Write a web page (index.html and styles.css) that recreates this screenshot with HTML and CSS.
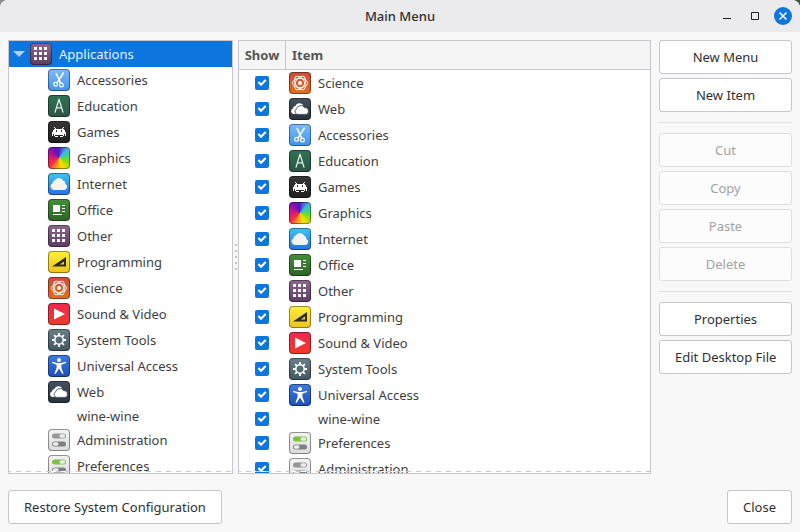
FILE: index.html
```html
<!DOCTYPE html>
<html lang="en">
<head>
  <meta charset="UTF-8">
  <meta name="viewport" content="width=device-width, initial-scale=1">
  <title>Main Menu</title>
  <link rel="stylesheet" href="styles.css">
</head>
<body>
  <svg class="sprite" aria-hidden="true">
    <symbol id="other" viewBox="0 0 20 20">
      <path fill="#fff" d="M3 3h3v3H3zM8 3h3v3H8zM13 3h3v3h-3zM3 8h3v3H3zM8 8h3v3H8zM13 8h3v3h-3zM3 13h3v3H3zM8 13h3v3H8zM13 13h3v3h-3z"/>
    </symbol>
    <symbol id="accessories" viewBox="0 0 20 20">
      <g fill="none" stroke="#fff" stroke-linecap="round">
        <path stroke-width="1.6" d="M7.2 3.6l4.4 9.4M14.2 3.2L8.2 12.6"/>
        <circle cx="6.6" cy="14.2" r="1.9" stroke-width="1.2"/>
        <circle cx="12.4" cy="15" r="1.9" stroke-width="1.2"/>
      </g>
    </symbol>
    <symbol id="education" viewBox="0 0 20 20">
      <g fill="none" stroke="#e4f0e8" stroke-width="1.2" stroke-linecap="round">
        <path d="M10 3.2L6 16.2M10 3.2l4 13M7.600 11.800h4.800"/>
      </g>
    </symbol>
    <symbol id="games" viewBox="0 0 20 20">
      <path fill="#fff" d="M5 5h1v1H5zM14 5h1v1h-1zM6 6h1v1H6zM13 6h1v1h-1zM5 7h10v1H5zM4 8h3v2H4zM8 8h4v2H8zM13 8h3v2h-3zM3 10h14v2H3zM3 12h1v2H3zM5 12h10v1H5zM16 12h1v2h-1zM5 13h1v1H5zM14 13h1v1h-1zM6 14h3v1H6zM11 14h3v1h-3z"/>
    </symbol>
    <symbol id="graphics" viewBox="0 0 20 20"></symbol>
    <symbol id="internet" viewBox="0 0 20 20">
      <path fill="#f4f4f4" d="M5 16a3.500 3.500 0 0 1-1.600-6.600 3 3 0 0 1 2.300-3 4.600 4.600 0 0 1 8.300.2 3.200 3.200 0 0 1 2.400 3.300A3.300 3.300 0 0 1 15.600 16z"/>
    </symbol>
    <symbol id="office" viewBox="0 0 20 20">
      <path fill="#fff" d="M4 5h7v7H4zM4 14h9v1H4zM13 5h3v1h-3zM13 8h3v1h-3zM13 11h3v1h-3z"/>
    </symbol>
    <symbol id="programming" viewBox="0 0 20 20">
      <path fill="#2e2b22" fill-rule="evenodd" d="M3 14.400L17 5v9.400zM10.800 12.500H15V9.600z"/>
    </symbol>
    <symbol id="science" viewBox="0 0 20 20">
      <g fill="none" stroke="#fff" stroke-width=".9">
        <ellipse cx="10" cy="10" rx="7.500" ry="4.600"/>
        <ellipse cx="10" cy="10" rx="7.500" ry="4.600" transform="rotate(60 10 10)"/>
        <ellipse cx="10" cy="10" rx="7.500" ry="4.600" transform="rotate(120 10 10)"/>
      </g>
      <circle cx="10" cy="10" r="2" fill="#fff"/>
    </symbol>
    <symbol id="sound" viewBox="0 0 20 20">
      <path fill="#fff" d="M5 4.500L16 10 5 15.500z"/>
    </symbol>
    <symbol id="system" viewBox="0 0 20 20">
      <g fill="none" stroke="#fff">
        <circle cx="10" cy="10" r="4.200" stroke-width="1.500"/>
        <path stroke-width="1.800" d="M10 3v2.500M10 14.500V17M3 10h2.500M14.500 10H17M5.050 5.050l1.800 1.800M13.150 13.150l1.800 1.800M5.050 14.950l1.800-1.800M13.150 6.850l1.800-1.800"/>
      </g>
    </symbol>
    <symbol id="access" viewBox="0 0 20 20">
      <circle cx="10" cy="4" r="2" fill="#fff"/>
      <path fill="#fff" d="M3 5.800l5 1.200h4l5-1.200v1.200l-4.600 1.800v3l2.200 6h-1.300L10 12.600 6.700 17.800H5.400l2.200-6v-3L3 7z"/>
    </symbol>
    <symbol id="web" viewBox="0 0 20 20">
      <path fill="#fff" d="M3.500 15a2.800 2.800 0 0 1-.6-5.400 3 3 0 0 1 2.500-2.700 4.600 4.600 0 0 1 7.600-1.200l-3 9.300z"/>
      <path fill="#fff" stroke="#39434f" stroke-width=".8" d="M7.200 15.400a3 3 0 0 1-.7-5.400 4.400 4.400 0 0 1 8-1.400 3.800 3.800 0 0 1 3.900 3.800 2.800 2.800 0 0 1-2.300 3z"/>
    </symbol>
    <symbol id="admin" viewBox="0 0 20 20">
      <rect x="3" y="3.500" width="14" height="5" rx="2.500" fill="#969696"/>
      <rect x="10.500" y="4.300" width="5.700" height="3.400" rx="1.700" fill="#ececec"/>
      <rect x="3" y="11.500" width="14" height="5" rx="2.500" fill="#808080"/>
      <rect x="3.800" y="12.300" width="5.700" height="3.400" rx="1.700" fill="#ececec"/>
    </symbol>
    <symbol id="preferences" viewBox="0 0 20 20">
      <rect x="3" y="3.500" width="14" height="5" rx="2.500" fill="#7cc142"/>
      <rect x="10.500" y="4.300" width="5.700" height="3.400" rx="1.700" fill="#ececec"/>
      <rect x="3" y="11.500" width="14" height="5" rx="2.500" fill="#808080"/>
      <rect x="3.800" y="12.300" width="5.700" height="3.400" rx="1.700" fill="#ececec"/>
    </symbol>
  </svg>

  <div class="window">
    <header class="titlebar">
      <h1>Main Menu</h1>
      <div class="window-buttons">
        <button type="button" aria-label="Minimize">
          <svg width="18" height="18"><path d="M5 11.500h8" stroke="#222" fill="none"/></svg>
        </button>
        <button type="button" aria-label="Maximize">
          <svg width="18" height="18"><path d="M5.500 5.500h7v7h-7z" stroke="#222" fill="none"/></svg>
        </button>
        <button type="button" class="close" aria-label="Close window">
          <svg width="18" height="18"><path d="M5.500 5.500l7 7M12.500 5.500l-7 7" stroke="#fff" stroke-width="1.500" fill="none"/></svg>
        </button>
      </div>
    </header>

    <main class="content">
      <nav class="pane menus">
        <div class="row selected">
          <span class="arrow"></span>
          <svg class="icon other"><use href="#other"/></svg>
          <span>Applications</span>
        </div>
        <ul id="menuTree"></ul>
      </nav>

      <div class="handle"><i></i><i></i><i></i><i></i><i></i></div>

      <section class="pane items">
        <table>
          <thead>
            <tr><th class="show">Show</th><th>Item</th></tr>
          </thead>
          <tbody id="itemTable"></tbody>
        </table>
      </section>

      <aside class="actions">
        <button type="button">New Menu</button>
        <button type="button">New Item</button>
        <hr>
        <button type="button" disabled>Cut</button>
        <button type="button" disabled>Copy</button>
        <button type="button" disabled>Paste</button>
        <button type="button" disabled>Delete</button>
        <hr>
        <button type="button">Properties</button>
        <button type="button">Edit Desktop File</button>
      </aside>
    </main>

    <footer class="bottom">
      <button type="button">Restore System Configuration</button>
      <button type="button">Close</button>
    </footer>
  </div>

  <script>
    const names = {
      accessories: "Accessories",
      education: "Education",
      games: "Games",
      graphics: "Graphics",
      internet: "Internet",
      office: "Office",
      other: "Other",
      programming: "Programming",
      science: "Science",
      sound: "Sound &amp; Video",
      system: "System Tools",
      access: "Universal Access",
      web: "Web",
      wine: "wine-wine",
      admin: "Administration",
      preferences: "Preferences"
    };

    const treeOrder = ["accessories", "education", "games", "graphics", "internet", "office", "other", "programming",
      "science", "sound", "system", "access", "web", "wine", "admin", "preferences"];
    const itemOrder = ["science", "web", "accessories", "education", "games", "graphics", "internet", "office",
      "other", "programming", "sound", "system", "access", "wine", "preferences", "admin"];

    // wine-wine has no icon, so its row is lower
    function icon(id) {
      if (id === "wine") return `<span class="no-icon"></span>`;
      return `<svg class="icon ${id}"><use href="#${id}"/></svg>`;
    }

    const tree = document.getElementById("menuTree");
    treeOrder.forEach(id => {
      const li = document.createElement("li");
      li.className = "row";
      li.innerHTML = `${icon(id)}<span>${names[id]}</span>`;
      tree.appendChild(li);
    });

    const table = document.getElementById("itemTable");
    itemOrder.forEach(id => {
      const tr = document.createElement("tr");
      tr.innerHTML = `<td class="show"><input type="checkbox" id="show-${id}" checked></td>
                      <td><label class="row" for="show-${id}">${icon(id)}<span>${names[id]}</span></label></td>`;
      table.appendChild(tr);
    });
  </script>
</body>
</html>
```
FILE: styles.css
```css
* {
  margin: 0;
  padding: 0;
  box-sizing: border-box;
}

body {
  font-family: "Noto Sans", "Open Sans", sans-serif;
  font-size: 13px;
  line-height: 18px;
  color: #3e3e3e;
  background: linear-gradient(to right, #8c8c8c, #3f5a3a);
}

.sprite {
  position: absolute;
  width: 0;
  height: 0;
}

.window {
  display: flex;
  flex-direction: column;
  height: 100vh;
  background: #f8f8f8;
  border-radius: 8px 8px 0 0;
  overflow: hidden;
}

/* title bar */
.titlebar {
  display: grid;
  grid-template-columns: 1fr auto 1fr;
  align-items: center;
  height: 32px;
  flex: none;
  padding: 0 8px;
  background: #ebebed;
}

.titlebar h1 {
  grid-column: 2;
  font-size: 13px;
  font-weight: 500;
  color: #303030;
}

.window-buttons {
  display: flex;
  justify-content: flex-end;
  gap: 10px;
}

.window-buttons button {
  width: 18px;
  height: 18px;
  border: none;
  border-radius: 50%;
  background: none;
}

.window-buttons .close {
  background: #0c75de;
}

.window-buttons svg {
  display: block;
}

/* panes */
.content {
  display: flex;
  flex: 1;
  min-height: 0;
  padding: 8px 8px 0;
}

.pane {
  position: relative;
  overflow: hidden;
  background: #fff;
  border: 1px solid #c6c6cc;
}

/* dashed line: more rows below */
.pane::after {
  content: "";
  position: absolute;
  left: 0;
  right: 0;
  bottom: 1px;
  height: 1px;
  background: repeating-linear-gradient(to right, #c8c8c8 0 2px, #fff 2px 7px, #c8c8c8 7px 10px);
}

.menus {
  width: 225px;
  flex: none;
}

.items {
  flex: 1;
}

.row {
  display: flex;
  align-items: center;
  gap: 7px;
}

.menus .row {
  padding: 2px 0 2px 39px;
}

.menus .selected {
  padding-left: 4px;
  color: #e6f0fb;
  background: #0c75de;
}

.arrow {
  width: 12px;
  margin-right: -2px;
  border: 6px solid transparent;
  border-top-color: #aed2f6;
  border-bottom: none;
}

ul {
  list-style: none;
}

.handle {
  display: flex;
  flex-direction: column;
  align-items: center;
  justify-content: center;
  gap: 4px;
  width: 5px;
  flex: none;
}

.handle i {
  width: 2px;
  height: 2px;
  border-radius: 1px;
  background: #b4b4b8;
}

table {
  width: 100%;
  border-collapse: separate;
  border-spacing: 0;
}

th {
  height: 29px;
  padding: 0 6px;
  text-align: left;
  font-weight: 700;
  color: #555;
  background: #f5f5f5;
  border-bottom: 1px solid #c6c6cc;
}

th.show {
  width: 47px;
  padding: 0;
  text-align: center;
  border-right: 1px solid #c6c6cc;
}

td {
  padding: 2px 3px;
}

td.show {
  padding: 0 1px 0 0;
}

input[type="checkbox"] {
  appearance: none;
  display: block;
  width: 14px;
  height: 14px;
  margin: 0 auto;
  border: 1px solid #c6c6cc;
  border-radius: 2px;
}

input[type="checkbox"]:checked {
  border: none;
  background: #0c75de;
}

input[type="checkbox"]:checked::before {
  content: "";
  display: block;
  width: 14px;
  height: 14px;
  background: #fff;
  clip-path: polygon(19% 49%, 30% 38%, 43% 51%, 71% 23%, 82% 34%, 43% 73%);
}

/* icons */
.icon {
  width: 22px;
  height: 22px;
  flex: none;
  border: 1px solid rgba(0, 0, 0, 0.4);
  border-radius: 4px;
  background-origin: border-box;
}

.no-icon {
  width: 22px;
  height: 18px;
}

.other { background-image: linear-gradient(#8c6a8c, #5e3c62); }
.accessories { background-image: linear-gradient(#7dbbfa, #3f93ee); }
.education { background-image: linear-gradient(#2f7355, #2c5444); }
.games { background-image: linear-gradient(#383838, #1e1e1e); }
.graphics { background-image: conic-gradient(from 0deg, #4a1cc0, #3fb8e0 45deg, #48d860 85deg, #9be000 120deg, #ffe000 160deg, #ff9a20 195deg, #f03040 230deg, #d01880 280deg, #7a10b0 325deg, #4a1cc0); }
.internet { background-image: linear-gradient(#3ec6ee, #2a6ee8); }
.office { background-image: linear-gradient(#42903a, #2e6426); }
.programming { background-image: linear-gradient(#fdf03c, #eec41c); }
.science { background-image: linear-gradient(#cc4c3c, #e07020); }
.sound { background-image: linear-gradient(#ee2850, #ee3a2a); }
.system { background-image: linear-gradient(#6c808a, #425660); }
.access { background-image: linear-gradient(#3f7ae2, #1c50b8); }
.web { background-image: linear-gradient(#46505e, #2a323c); }
.admin,
.preferences { background-image: linear-gradient(#f4f4f4, #dcdcdc); }

/* buttons */
.actions {
  display: flex;
  flex-direction: column;
  gap: 4px;
  width: 133px;
  flex: none;
  margin-left: 8px;
}

.actions button,
.bottom button {
  height: 34px;
  padding: 0 15px;
  font: inherit;
  color: #303030;
  white-space: nowrap;
  background: #fff;
  border: 1px solid #c6c6cc;
  border-radius: 3px;
}

.actions button:disabled {
  color: #a2a2a2;
  background: #fcfcfc;
  border-color: #dedee0;
}

.actions button:hover:enabled,
.bottom button:hover {
  background: #f2f2f4;
}

hr {
  margin: 6px 0;
  border: none;
  border-top: 1px solid #dedee0;
}

.bottom {
  display: flex;
  justify-content: space-between;
  flex: none;
  padding: 16px 8px 8px;
}
```
